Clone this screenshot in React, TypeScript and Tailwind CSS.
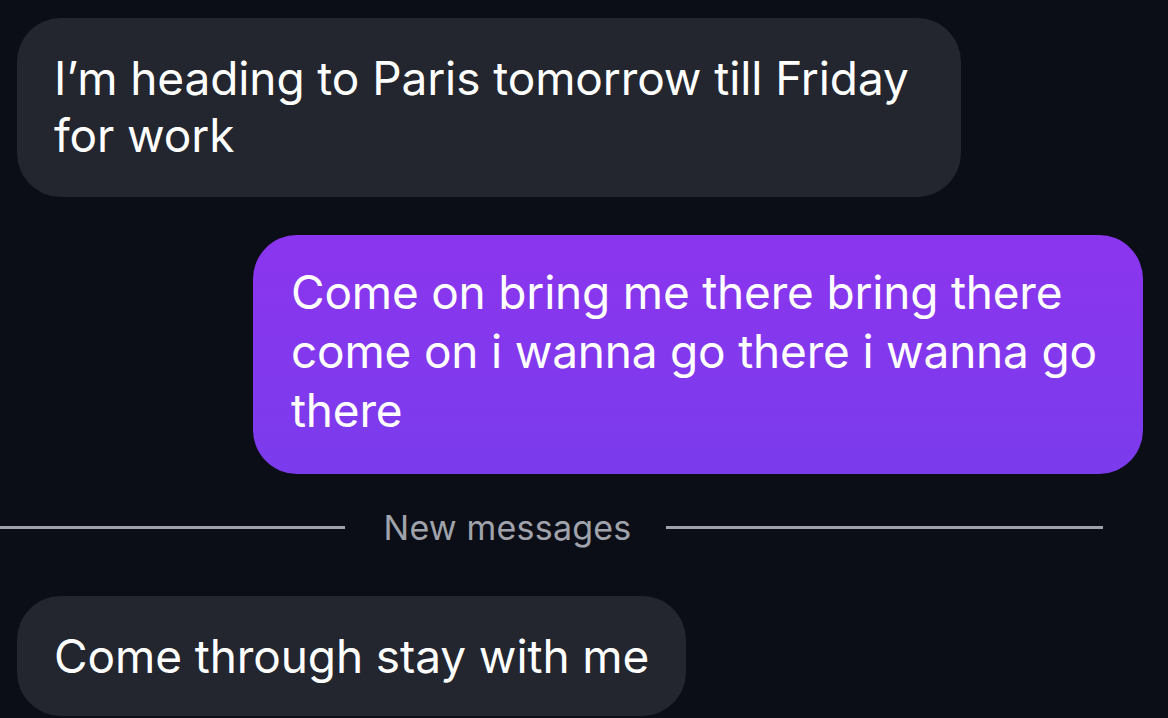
const font = { fontFamily: 'Inter, "Noto Sans", sans-serif' }

export default function App() {
  return (
    <div className="h-[718px] w-[1168px] overflow-hidden bg-[#0b0e16]" style={font}>
      <div className="flex flex-col pl-[17px] pr-[25px] pt-[18px]">
        {/* incoming */}
        <div className="w-[944px] self-start rounded-[44px] bg-[#23262e] px-[37px] pb-[33px] pt-[32px] text-[46px] leading-[57px] tracking-[-0.1px] text-white">
          I’m heading to Paris tomorrow till Friday for work
        </div>

        {/* outgoing */}
        <div className="mt-[38px] w-[890px] self-end rounded-[44px] bg-gradient-to-b from-[#8b35ee] to-[#7b3bed] px-[38px] pb-[34px] pt-[28px] text-[46px] leading-[59px] tracking-[-0.2px] text-white">
          Come on bring me there bring there come on i wanna go there i wanna go there
        </div>

        {/* divider */}
        <div className="-ml-[17px] mt-[33px] flex h-[40px] items-center">
          <div className="h-[3px] w-[345px] bg-[#9fa1ab]" />
          <span className="ml-[36px] mr-[32px] w-[253px] whitespace-nowrap text-center text-[34px] tracking-[0.2px] text-[#a0a3ab]">
            New messages
          </span>
          <div className="h-[3px] w-[437px] bg-[#9fa1ab]" />
        </div>

        {/* incoming */}
        <div className="mt-[49px] flex">
          <div className="rounded-[44px] bg-[#23262e] px-[37px] pb-[31px] pt-[32px] text-[46px] leading-[57px] tracking-[-0.1px] text-white">
            Come through stay with me
          </div>
        </div>
      </div>
    </div>
  )
}
